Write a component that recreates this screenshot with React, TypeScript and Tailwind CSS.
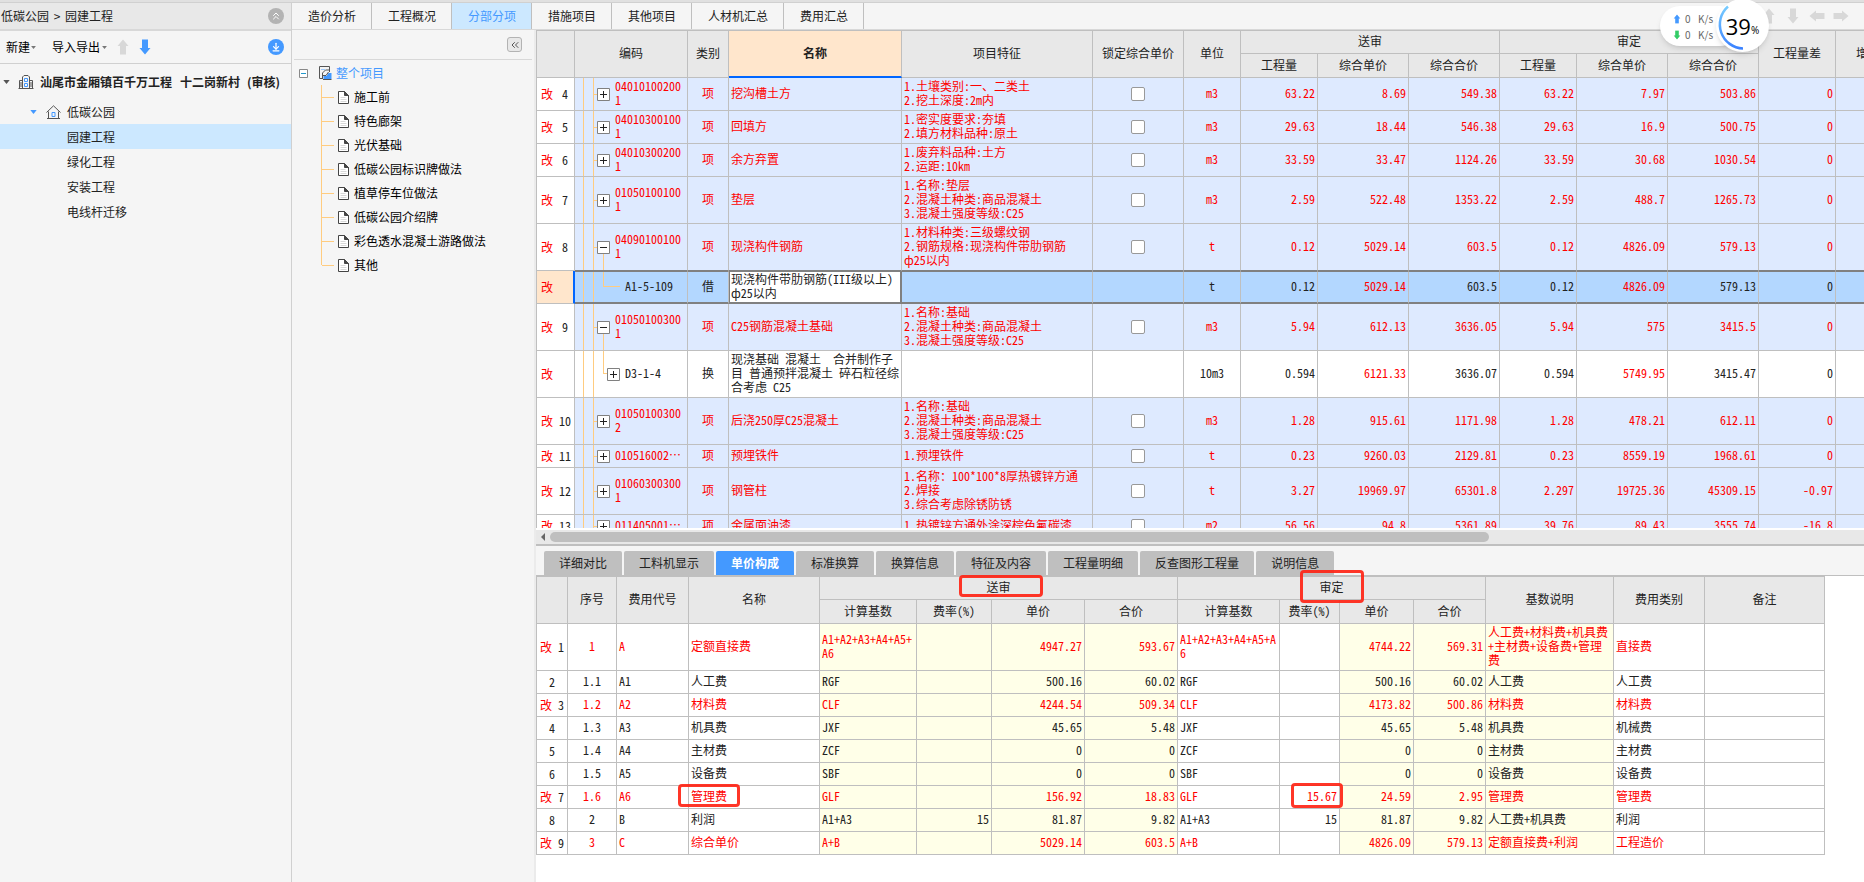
import { ChevronsLeft, ChevronsUp, ArrowDownToLine } from "lucide-react";
import clsx from "clsx";

type Item = {
  no?: string;
  sub?: boolean;
  selected?: boolean;
  toggle?: "+" | "-";
  code: string;
  cat: string;
  name: string;
  feat: string;
  unit: string;
  nums: string[];
  h: string;
};

const items: Item[] = [
  { no: "4", toggle: "+", code: "040101002001", cat: "项", name: "挖沟槽土方", feat: "1.土壤类别:一、二类土\n2.挖土深度:2m内", unit: "m3", nums: ["63.22", "8.69", "549.38", "63.22", "7.97", "503.86", "0"], h: "h-8" },
  { no: "5", toggle: "+", code: "040103001001", cat: "项", name: "回填方", feat: "1.密实度要求:夯填\n2.填方材料品种:原土", unit: "m3", nums: ["29.63", "18.44", "546.38", "29.63", "16.9", "500.75", "0"], h: "h-8" },
  { no: "6", toggle: "+", code: "040103002001", cat: "项", name: "余方弃置", feat: "1.废弃料品种:土方\n2.运距:10km", unit: "m3", nums: ["33.59", "33.47", "1124.26", "33.59", "30.68", "1030.54", "0"], h: "h-8" },
  { no: "7", toggle: "+", code: "010501001001", cat: "项", name: "垫层", feat: "1.名称:垫层\n2.混凝土种类:商品混凝土\n3.混凝土强度等级:C25", unit: "m3", nums: ["2.59", "522.48", "1353.22", "2.59", "488.7", "1265.73", "0"], h: "h-[46px]" },
  { no: "8", toggle: "-", code: "040901001001", cat: "项", name: "现浇构件钢筋", feat: "1.材料种类:三级螺纹钢\n2.钢筋规格:现浇构件带肋钢筋\nф25以内", unit: "t", nums: ["0.12", "5029.14", "603.5", "0.12", "4826.09", "579.13", "0"], h: "h-[46px]" },
  { sub: true, selected: true, code: "A1-5-109", cat: "借", name: "现浇构件带肋钢筋(III级以上)\nф25以内", feat: "", unit: "t", nums: ["0.12", "5029.14", "603.5", "0.12", "4826.09", "579.13", "0"], h: "h-[30px]" },
  { no: "9", toggle: "-", code: "010501003001", cat: "项", name: "C25钢筋混凝土基础", feat: "1.名称:基础\n2.混凝土种类:商品混凝土\n3.混凝土强度等级:C25", unit: "m3", nums: ["5.94", "612.13", "3636.05", "5.94", "575", "3415.5", "0"], h: "h-[46px]" },
  { sub: true, toggle: "+", code: "D3-1-4", cat: "换", name: "现浇基础 混凝土  合并制作子\n目 普通预拌混凝土 碎石粒径综\n合考虑 C25", feat: "", unit: "10m3", nums: ["0.594", "6121.33", "3636.07", "0.594", "5749.95", "3415.47", "0"], h: "h-[46px]" },
  { no: "10", toggle: "+", code: "010501003002", cat: "项", name: "后浇250厚C25混凝土", feat: "1.名称:基础\n2.混凝土种类:商品混凝土\n3.混凝土强度等级:C25", unit: "m3", nums: ["1.28", "915.61", "1171.98", "1.28", "478.21", "612.11", "0"], h: "h-[46px]" },
  { no: "11", toggle: "+", code: "010516002⋯", cat: "项", name: "预埋铁件", feat: "1.预埋铁件", unit: "t", nums: ["0.23", "9260.03", "2129.81", "0.23", "8559.19", "1968.61", "0"], h: "h-[22px]" },
  { no: "12", toggle: "+", code: "010603003001", cat: "项", name: "钢管柱", feat: "1.名称：100*100*8厚热镀锌方通\n2.焊接\n3.综合考虑除锈防锈", unit: "t", nums: ["3.27", "19969.97", "65301.8", "2.297", "19725.36", "45309.15", "-0.97"], h: "h-[46px]" },
  { no: "13", toggle: "+", code: "011405001⋯", cat: "项", name: "金属面油漆", feat: "1.热镀锌方通外涂深棕色氟碳漆", unit: "m2", nums: ["56.56", "94.8", "5361.89", "39.76", "89.43", "3555.74", "-16.8"], h: "h-[22px]" },
];

type Fee = { no: string; changed?: boolean; cells: string[]; mark?: boolean };

const fees: Fee[] = [
  { no: "1", changed: true, cells: ["1", "A", "定额直接费", "A1+A2+A3+A4+A5+\nA6", "", "4947.27", "593.67", "A1+A2+A3+A4+A5+A\n6", "", "4744.22", "569.31", "人工费+材料费+机具费\n+主材费+设备费+管理\n费", "直接费", ""] },
  { no: "2", cells: ["1.1", "A1", "人工费", "RGF", "", "500.16", "60.02", "RGF", "", "500.16", "60.02", "人工费", "人工费", ""] },
  { no: "3", changed: true, cells: ["1.2", "A2", "材料费", "CLF", "", "4244.54", "509.34", "CLF", "", "4173.82", "500.86", "材料费", "材料费", ""] },
  { no: "4", cells: ["1.3", "A3", "机具费", "JXF", "", "45.65", "5.48", "JXF", "", "45.65", "5.48", "机具费", "机械费", ""] },
  { no: "5", cells: ["1.4", "A4", "主材费", "ZCF", "", "0", "0", "ZCF", "", "0", "0", "主材费", "主材费", ""] },
  { no: "6", cells: ["1.5", "A5", "设备费", "SBF", "", "0", "0", "SBF", "", "0", "0", "设备费", "设备费", ""] },
  { no: "7", changed: true, mark: true, cells: ["1.6", "A6", "管理费", "GLF", "", "156.92", "18.83", "GLF", "15.67", "24.59", "2.95", "管理费", "管理费", ""] },
  { no: "8", cells: ["2", "B", "利润", "A1+A3", "15", "81.87", "9.82", "A1+A3", "15", "81.87", "9.82", "人工费+机具费", "利润", ""] },
  { no: "9", changed: true, cells: ["3", "C", "综合单价", "A+B", "", "5029.14", "603.5", "A+B", "", "4826.09", "579.13", "定额直接费+利润", "工程造价", ""] },
];

const topTabs = ["造价分析", "工程概况", "分部分项", "措施项目", "其他项目", "人材机汇总", "费用汇总"];
const detailTabs = ["详细对比", "工料机显示", "单价构成", "标准换算", "换算信息", "特征及内容", "工程量明细", "反查图形工程量", "说明信息"];
const units = ["园建工程", "绿化工程", "安装工程", "电线杆迁移"];
const sections = ["施工前", "特色廊架", "光伏基础", "低碳公园标识牌做法", "植草停车位做法", "低碳公园介绍牌", "彩色透水混凝土游路做法", "其他"];

const th = "border-b border-r border-[#bfbfbf] bg-[#e8e8e8] px-0 pt-0 pb-0.5 text-center font-normal";
const gridFont = "font-['Noto_Sans_CJK_SC',sans-serif] text-[12px] leading-[14px] [font-feature-settings:'hwid'] text-[#222]";

function Arrow({ className }: { className?: string }) {
  return (
    <svg viewBox="0 0 16 16" className={clsx("size-4", className)} fill="currentColor">
      <path d="M8 0.5 13.5 7H11v8.5H5V7H2.5z" />
    </svg>
  );
}

function Caret({ className }: { className: string }) {
  return (
    <svg viewBox="0 0 8 5" className={className} fill="currentColor">
      <path d="M0 0h8L4 5z" />
    </svg>
  );
}

function DocIcon() {
  return (
    <svg viewBox="0 0 11 13" className="h-[13px] w-[11px]" fill="none" stroke="#444">
      <path d="M1 .5h5.5l4 4v8H.5V.5z" fill="#fff" />
      <path d="M6.5 .5v4h4z" fill="#444" />
      <path d="M2.5 6.5h5M2.5 8.5h6M2.5 10.5h6" stroke="#d8d8d8" />
    </svg>
  );
}

function BuildingIcon() {
  return (
    <svg viewBox="0 0 16 16" className="size-4" fill="none" stroke="#555">
      <path d="M4.5 14.5V3L6 1.5h4L11.500 3v11.5M.5 14.5h15M1.500 14V6.500h3M11.500 6.500h3V14M3 8v5M13 8v5" />
      <path d="M6.500 4.500h3v3h-3zM6.500 9.500h3v3h-3z" stroke="#4499ff" />
    </svg>
  );
}

function HouseIcon() {
  return (
    <svg viewBox="0 0 15 14" className="h-[14px] w-[15px]" fill="none" stroke="#555">
      <path d="M.5 7.500 7.500 .8l7 6.700M2.500 6.500v7h10v-7M1 13.500h13" />
      <path d="M6 7.500h3v4H6z" stroke="#4499ff" />
    </svg>
  );
}

function ProjectIcon() {
  return (
    <svg viewBox="0 0 14 14" className="size-[14px]" fill="none" stroke="#555">
      <path d="M4 12.500H1.500V.5h10v3.500H7.500L4.500 7v6M11.500 4v2" />
      <path d="M3 3.500h4" stroke="#9ccaff" />
      <path d="M5.500 13V10h3l2-3h3v6z" fill="#4499ff" stroke="none" />
      <path d="M5 9.500h3L10.500 6" />
      <path d="M5 13.500h8.500" />
    </svg>
  );
}

function Toggle({ sign }: { sign: "+" | "-" }) {
  return (
    <button aria-label={sign === "+" ? "展开" : "折叠"} className="block size-[13px] shrink-0">
      <svg viewBox="0 0 13 13" className="size-[13px]" fill="#fff" stroke="#808080">
        <path d="M.5 .5h12v12H.5z" />
        <path d={sign === "+" ? "M3 6.500h7M6.500 3v7" : "M3 6.500h7"} stroke="#222" />
      </svg>
    </button>
  );
}

function Mark({ className }: { className: string }) {
  return <span className={clsx("pointer-events-none absolute z-10 rounded-[4px] border-[3px] border-[#ff2010]/90", className)} />;
}

function CodeCell({ item }: { item: Item }) {
  return (
    <div className={clsx("flex items-center", item.h)}>
      <span className="ml-2 h-full w-px bg-[#ffcc80]" />
      <span className="ml-[9px] h-full w-px bg-[#ffcc80]" />
      {item.sub ? (
        <>
          <span className={clsx("ml-[9px] h-1/2 self-start border-b border-l border-[#ffcc80]", item.toggle ? "w-1" : "w-[17px]")} />
          {item.toggle && <Toggle sign={item.toggle} />}
          <span className="ml-[5px] pb-0.5">{item.code}</span>
        </>
      ) : (
        <>
          <span className="h-px w-[3px] bg-[#ffcc80]" />
          <span className="flex h-full flex-col items-center">
            <span className="flex-1" />
            <Toggle sign={item.toggle!} />
            <span className={clsx("w-px flex-1", item.toggle === "-" && "bg-[#ffcc80]")} />
          </span>
          <span className="ml-[5px] w-[67px] break-all pb-0.5">{item.code}</span>
        </>
      )}
    </div>
  );
}

function ItemRow({ item, beforeSelected }: { item: Item; beforeSelected: boolean }) {
  const cell = clsx(
    "border-r border-[#bfbfbf]",
    item.selected ? "border-y border-b-2 border-y-[#808080] bg-[#b3d7ff]" : "border-b",
    beforeSelected && "border-b-[#808080]",
    !item.sub && "bg-[#deeaff]",
  );
  const ink = item.sub ? "text-[#222]" : "text-[#ff0000]";
  return (
    <tr>
      <td className={clsx("border-b border-r border-[#bfbfbf] p-0", item.selected && "border-r-2 border-r-[#0066ff] bg-[#ffe6cc]")}>
        <div className="flex gap-1.5 pl-1">
          <span className="text-[#ff0000]">改</span>
          <span className="w-3 text-center">{item.no}</span>
        </div>
      </td>
      <td className={clsx(cell, ink, "p-0")}>
        <CodeCell item={item} />
      </td>
      <td className={clsx(cell, ink, "px-0 pt-0 pb-0.5 text-center")}>{item.cat}</td>
      <td
        className={clsx(
          item.selected ? "border border-b-2 border-r-2 border-[#808080] bg-white pl-px" : clsx(cell, "pl-0.5"),
          ink,
          "overflow-hidden whitespace-pre pt-0 pr-0 pb-0.5",
        )}
      >
        {item.name}
      </td>
      <td className={clsx(cell, ink, "overflow-hidden whitespace-pre pt-0 pr-0 pb-0.5 pl-0.5")}>{item.feat}</td>
      <td className={clsx(cell, "p-0")}>
        {!item.sub && (
          <input
            type="checkbox"
            aria-label={`锁定综合单价 ${item.name}`}
            className="mx-auto block size-[14px] appearance-none rounded-[2px] border border-[#999] bg-white checked:bg-[#4499ff]"
          />
        )}
      </td>
      <td className={clsx(cell, ink, "px-0 pt-0 pb-0.5 text-center")}>{item.unit}</td>
      {item.nums.map((n, i) => (
        <td key={i} className={clsx(cell, i === 1 || i === 4 ? "text-[#ff0000]" : ink, "pt-0 pr-0.5 pb-0.5 pl-0 text-right")}>
          {n}
        </td>
      ))}
      <td className={clsx(cell, "p-0")} />
    </tr>
  );
}

function ItemTable() {
  return (
    <table className={clsx("w-[1389px] table-fixed border-separate border-spacing-0 border-l border-t border-[#bfbfbf] bg-white", gridFont)}>
      <colgroup>
        <col className="w-[38px]" />
        <col className="w-[113px]" />
        <col className="w-[41px]" />
        <col className="w-[173px]" />
        <col className="w-[191px]" />
        <col className="w-[91px]" />
        <col className="w-[57px]" />
        <col className="w-[77px]" />
        <col className="w-[91px]" />
        <col className="w-[91px]" />
        <col className="w-[77px]" />
        <col className="w-[91px]" />
        <col className="w-[91px]" />
        <col className="w-[77px]" />
        <col className="w-[89px]" />
      </colgroup>
      <thead>
        <tr className="h-[23px]">
          <th rowSpan={2} className={th} />
          <th rowSpan={2} className={th}>编码</th>
          <th rowSpan={2} className={th}>类别</th>
          <th rowSpan={2} className="border-b-2 border-r border-b-[#0066ff] border-r-[#bfbfbf] bg-[#ffe6cc] px-0 pt-0 pb-0.5 font-bold">名称</th>
          <th rowSpan={2} className={th}>项目特征</th>
          <th rowSpan={2} className={th}>锁定综合单价</th>
          <th rowSpan={2} className={th}>单位</th>
          <th colSpan={3} className={th}>送审</th>
          <th colSpan={3} className={th}>审定</th>
          <th rowSpan={2} className={th}>工程量差</th>
          <th rowSpan={2} className={th}>增减金额</th>
        </tr>
        <tr className="h-6">
          {["工程量", "综合单价", "综合合价", "工程量", "综合单价", "综合合价"].map((t, i) => (
            <th key={i} className={th}>{t}</th>
          ))}
        </tr>
      </thead>
      <tbody>
        {items.map((item, i) => (
          <ItemRow key={i} item={item} beforeSelected={!!items[i + 1]?.selected} />
        ))}
      </tbody>
    </table>
  );
}

// alignment and tint per fee column, starting at 序号
const feeCols = [
  "text-center",
  "pl-0.5",
  "pl-0.5",
  "pl-0.5 bg-[#ffffe8]",
  "pr-0.5 text-right bg-[#ffffe8]",
  "pr-0.5 text-right bg-[#ffffe8]",
  "pr-0.5 text-right bg-[#ffffe8]",
  "pl-0.5",
  "pr-0.5 text-right",
  "pr-0.5 text-right bg-[#ffffe8]",
  "pr-0.5 text-right bg-[#ffffe8]",
  "pl-0.5 bg-[#ffffe8]",
  "pl-0.5",
  "pl-0.5",
];

function FeeTable() {
  return (
    <table className={clsx("w-[1289px] table-fixed border-separate border-spacing-0 border-l border-t border-[#bfbfbf] bg-white", gridFont)}>
      <colgroup>
        <col className="w-[31px]" />
        <col className="w-[49px]" />
        <col className="w-[72px]" />
        <col className="w-[131px]" />
        <col className="w-[97px]" />
        <col className="w-[75px]" />
        <col className="w-[93px]" />
        <col className="w-[93px]" />
        <col className="w-[102px]" />
        <col className="w-[60px]" />
        <col className="w-[74px]" />
        <col className="w-[72px]" />
        <col className="w-[128px]" />
        <col className="w-[91px]" />
        <col className="w-[120px]" />
      </colgroup>
      <thead>
        <tr className="h-[23px]">
          <th rowSpan={2} className={th} />
          <th rowSpan={2} className={th}>序号</th>
          <th rowSpan={2} className={th}>费用代号</th>
          <th rowSpan={2} className={th}>名称</th>
          <th colSpan={4} className={th}>
            <span className="relative">
              送审
              <Mark className="-bottom-0.5 -left-7 -right-8 -top-[3px]" />
            </span>
          </th>
          <th colSpan={4} className={th}>
            <span className="relative">
              审定
              <Mark className="-inset-x-5 -bottom-2 -top-2" />
            </span>
          </th>
          <th rowSpan={2} className={th}>基数说明</th>
          <th rowSpan={2} className={th}>费用类别</th>
          <th rowSpan={2} className={th}>备注</th>
        </tr>
        <tr className="h-6">
          {["计算基数", "费率(%)", "单价", "合价", "计算基数", "费率(%)", "单价", "合价"].map((t, i) => (
            <th key={i} className={th}>{t}</th>
          ))}
        </tr>
      </thead>
      <tbody>
        {fees.map((fee, r) => (
          <tr key={fee.no} className={clsx(r === 0 ? "h-[47px]" : "h-[23px]", fee.changed && "text-[#ff0000]")}>
            <td className="border-b border-r border-[#bfbfbf] p-0">
              <div className="flex justify-center gap-1.5">
                {fee.changed && <span>改</span>}
                <span className="text-[#222]">{fee.no}</span>
              </div>
            </td>
            {fee.cells.map((c, i) => (
              <td key={i} className={clsx("whitespace-pre border-b border-r border-[#bfbfbf] pb-0.5", feeCols[i])}>
                {fee.mark && (i === 2 || i === 8) ? (
                  <span className="relative">
                    {c}
                    <Mark className={i === 2 ? "-inset-x-[13px] -inset-y-[3px]" : "-inset-y-1 -left-4 -right-1.5"} />
                  </span>
                ) : (
                  c
                )}
              </td>
            ))}
          </tr>
        ))}
      </tbody>
    </table>
  );
}

function ProjectPanel() {
  return (
    <aside className="w-[292px] shrink-0 border-r border-[#d0d0d0]">
      <div className="flex h-7 items-center justify-between border-b-2 border-[#d8d8d8] bg-[#e8e8e8] pl-px pr-[7px]">
        <span>
          低碳公园 <span className="px-0.5">&gt;</span> 园建工程
        </span>
        <button aria-label="收起" className="flex size-4 items-center justify-center rounded-full bg-[#b3b3b3] text-white">
          <ChevronsUp className="size-3" />
        </button>
      </div>
      <div className="flex h-[33px] items-center border-b border-[#d0d0d0] pl-1.5 pr-[7px] text-black">
        <button className="flex items-center gap-px">
          新建
          <Caret className="h-[3px] w-[5px] text-[#777]" />
        </button>
        <button className="ml-4 flex items-center gap-0.5">
          导入导出
          <Caret className="h-[3px] w-[5px] text-[#777]" />
        </button>
        <button aria-label="上移" className="ml-2">
          <Arrow className="text-[#d8d8d8]" />
        </button>
        <button aria-label="下移" className="ml-1.5">
          <Arrow className="rotate-180 text-[#4499ff]" />
        </button>
        <button aria-label="下载" className="ml-auto flex size-4 items-center justify-center rounded-full bg-[#4499ff] text-white">
          <ArrowDownToLine className="size-2.5" strokeWidth={3} />
        </button>
      </div>
      <div className="flex h-[35px] items-center pl-[3px] font-bold">
        <Caret className="mr-2 h-1 w-[7px] text-[#555]" />
        <BuildingIcon />
        <span className="ml-1.5">汕尾市金厢镇百千万工程</span>
        <span className="ml-2">十二岗新村</span>
        <span className="ml-[7px]">(审核)</span>
      </div>
      <div className="flex h-[25px] items-center pl-[30px]">
        <Caret className="mr-[9px] h-1 w-[7px] text-[#4499ff]" />
        <HouseIcon />
        <span className="ml-1.5">低碳公园</span>
      </div>
      {units.map((u, i) => (
        <button key={u} className={clsx("block h-[25px] w-full pl-[67px] text-left", i === 0 && "bg-[#cce8ff]")}>
          {u}
        </button>
      ))}
    </aside>
  );
}

function SectionPanel() {
  return (
    <aside className="w-[244px] shrink-0 border-r-2 border-[#ebebeb] text-black">
      <div className="mx-0.5 flex h-[30px] items-center justify-end border-b border-[#d8d8d8] pr-2.5">
        <button aria-label="收起面板" className="flex size-[15px] items-center justify-center rounded-[3px] border border-[#b3b3b3] bg-[#e8e8e8] text-[#555]">
          <ChevronsLeft className="size-3" />
        </button>
      </div>
      <div className="pt-px">
        <div className="flex h-6 items-center pl-[7px]">
          <svg viewBox="0 0 9 9" className="size-[9px]" fill="#fff" stroke="#888">
            <path d="M.5 .5h8v8h-8z" />
            <path d="M2 4.500h5" stroke="#2299cc" />
          </svg>
          <span className="ml-2.5">
            <ProjectIcon />
          </span>
          <a href="#all" className="ml-1 text-[#4499ff]">整个项目</a>
        </div>
        {sections.map((s, i) => (
          <div key={s} className="flex h-6 items-center pl-[29px]">
            <span className={clsx("w-px self-start bg-[#ffcc80]", i === sections.length - 1 ? "h-3" : "h-full")} />
            <span className="mr-1 h-px w-3 bg-[#ffcc80]" />
            <DocIcon />
            <span className="ml-[5px]">{s}</span>
          </div>
        ))}
      </div>
    </aside>
  );
}

function SpeedWidget() {
  return (
    <div className="absolute -top-1 right-[95px] z-20 flex items-center">
      <div className="-mr-6 h-10 w-20 rounded-full bg-white pl-[11px] pt-[5px] text-[10px] leading-[14px] text-[#666] shadow-md">
        <div className="flex items-center">
          <Arrow className="-ml-0.5 text-[#4499ff] [scale:0.6]" />
          <span className="w-[13px]">0</span>K/s
        </div>
        <div className="flex items-center">
          <Arrow className="-ml-0.5 rotate-180 text-[#33cc66] [scale:0.6]" />
          <span className="w-[13px]">0</span>K/s
        </div>
      </div>
      <div className="relative flex size-[53px] items-center justify-center rounded-full bg-white shadow-md">
        <svg viewBox="0 0 53 53" className="absolute inset-0" fill="none">
          <defs>
            <linearGradient id="ring" x1="0" y1="0" x2="0" y2="1">
              <stop offset="0" stopColor="#77ccff" />
              <stop offset="1" stopColor="#3b82ff" />
            </linearGradient>
          </defs>
          <path d="M12 7.500A24 24 0 0 0 27 49.500" stroke="url(#ring)" strokeWidth="2.5" />
        </svg>
        <span className="font-['Open_Sans',sans-serif] text-[22px] text-black">39</span>
        <span className="pt-2 font-['Open_Sans',sans-serif] text-[10px] text-black">%</span>
      </div>
    </div>
  );
}

export default function App() {
  return (
    <div lang="zh-CN" className="flex min-h-screen flex-col overflow-hidden bg-[#f5f5f5] font-['Noto_Sans_CJK_SC',sans-serif] text-[12px] leading-4 text-[#222]">
      <div className="h-[3px] border-b border-[#d0d0d0] bg-[#e0e0e0]" />
      <div className="flex flex-1">
        <ProjectPanel />
        <div className="flex min-w-0 flex-1 flex-col">
          <nav className="relative flex h-[27px] border-b border-[#d8d8d8]">
            {topTabs.map((t, i) => (
              <button key={t} className={clsx("border-r border-[#bfbfbf] pl-4 pr-[15px]", i === 2 && "bg-[#cce8ff] text-[#4499ff]")}>
                {t}
              </button>
            ))}
            <div className="ml-auto flex items-center gap-2 pr-[15px] text-[#d8d8d8]">
              <Arrow />
              <Arrow className="rotate-180" />
              <Arrow className="-rotate-90" />
              <Arrow className="rotate-90" />
            </div>
            <SpeedWidget />
          </nav>
          <div className="flex flex-1">
            <SectionPanel />
            <main className="min-w-0 flex-1 overflow-hidden bg-white">
              <div className="h-[498px] overflow-hidden">
                <ItemTable />
              </div>
              <div className="mt-0.5 flex h-4 items-center gap-[5px] border-b-2 border-[#bfbfbf] bg-[#e8e8e8] pl-[5px]">
                <svg viewBox="0 0 4 8" className="h-2 w-1" fill="#666">
                  <path d="M4 0v8L0 4z" />
                </svg>
                <div className="h-2.5 w-[71%] rounded-full bg-[#bfbfbf]" />
              </div>
              <div className="flex gap-0.5 border-b border-[#bfbfbf] bg-[#f5f5f5] pl-2 pt-[5px]">
                {detailTabs.map((t, i) => (
                  <button
                    key={t}
                    className={clsx("h-6 rounded-t-[2px] px-[15px]", i === 2 ? "bg-[#4499ff] font-bold text-white" : "bg-[#bfbfbf]")}
                  >
                    {t}
                  </button>
                ))}
              </div>
              <FeeTable />
            </main>
          </div>
        </div>
      </div>
    </div>
  );
}
